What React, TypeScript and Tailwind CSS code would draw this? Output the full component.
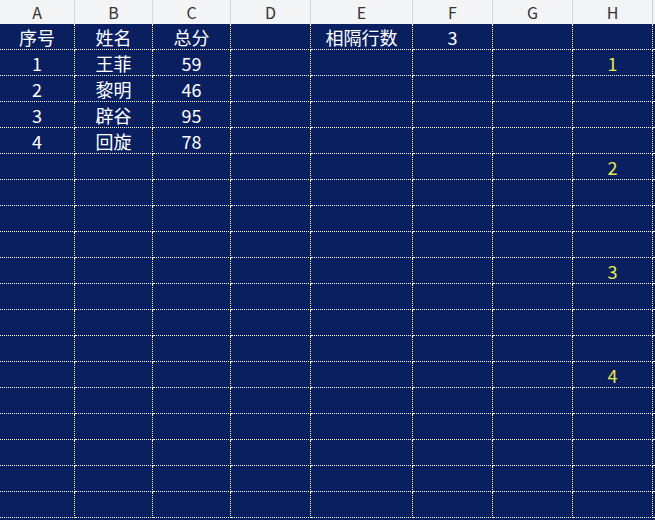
const cols = ["A", "B", "C", "D", "E", "F", "G", "H"];
const widths = [75, 78, 78, 80, 102, 80, 80, 80];

const data: string[][] = [
  ["序号", "姓名", "总分", "", "相隔行数", "3", "", ""],
  ["1", "王菲", "59", "", "", "", "", "1"],
  ["2", "黎明", "46", "", "", "", "", ""],
  ["3", "辟谷", "95", "", "", "", "", ""],
  ["4", "回旋", "78", "", "", "", "", ""],
  ["", "", "", "", "", "", "", "2"],
  ["", "", "", "", "", "", "", ""],
  ["", "", "", "", "", "", "", ""],
  ["", "", "", "", "", "", "", ""],
  ["", "", "", "", "", "", "", "3"],
  ["", "", "", "", "", "", "", ""],
  ["", "", "", "", "", "", "", ""],
  ["", "", "", "", "", "", "", ""],
  ["", "", "", "", "", "", "", "4"],
  ["", "", "", "", "", "", "", ""],
  ["", "", "", "", "", "", "", ""],
  ["", "", "", "", "", "", "", ""],
  ["", "", "", "", "", "", "", ""],
  ["", "", "", "", "", "", "", ""],
];

const grid = { gridTemplateColumns: widths.map((w) => `${w}px`).join(" ") + " 1fr" };

export default function App() {
  return (
    <div
      className="w-[655px] h-[520px] overflow-hidden bg-[#0a1f60]"
      style={{ fontFamily: '"Noto Sans CJK SC", "Noto Sans", sans-serif' }}
    >
      <div className="grid h-[24px] bg-[#f3f4f6] text-[#333] text-[16px]" style={grid}>
        {cols.map((c) => (
          <div key={c} className="flex items-center justify-center border-r border-[#d4d4d4] leading-none">
            {c}
          </div>
        ))}
        <div className="bg-[#f3f4f6]" />
      </div>
      {data.map((row, i) => (
        <div key={i} className="grid h-[26px]" style={grid}>
          {row.map((v, j) => (
            <div
              key={j}
              className={`flex items-center justify-center border-r border-b border-dotted border-[#fdfbe4] text-[18px] leading-none pt-[1px] ${
                j === 7 ? "text-[#e8ea4a]" : "text-white"
              }`}
            >
              {v}
            </div>
          ))}
          <div className="border-b border-dotted border-[#fdfbe4]" />
        </div>
      ))}
    </div>
  );
}
